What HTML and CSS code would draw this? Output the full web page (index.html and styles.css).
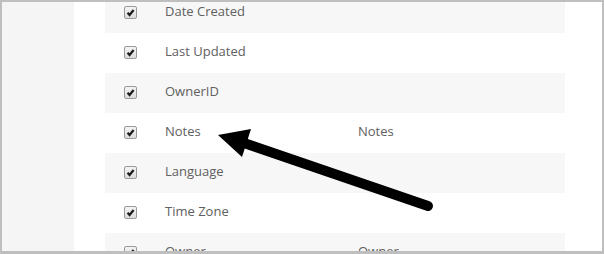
FILE: index.html
```html
<!DOCTYPE html>
<html>
<head>
<meta charset="utf-8">
<link rel="stylesheet" href="styles.css">
</head>
<body>
<div class="frame">
  <aside class="side"></aside>
  <main class="content">
    <div class="table">
      <div class="row alt"><span class="cb"><svg viewBox="0 0 12 12"><path d="M2.8 6.2 L5 8.6 L9.4 3.2"/></svg></span><span class="name">Date Created</span><span class="label"></span></div>
      <div class="row"><span class="cb"><svg viewBox="0 0 12 12"><path d="M2.8 6.2 L5 8.6 L9.4 3.2"/></svg></span><span class="name">Last Updated</span><span class="label"></span></div>
      <div class="row alt"><span class="cb"><svg viewBox="0 0 12 12"><path d="M2.8 6.2 L5 8.6 L9.4 3.2"/></svg></span><span class="name">OwnerID</span><span class="label"></span></div>
      <div class="row"><span class="cb"><svg viewBox="0 0 12 12"><path d="M2.8 6.2 L5 8.6 L9.4 3.2"/></svg></span><span class="name">Notes</span><span class="label">Notes</span></div>
      <div class="row alt"><span class="cb"><svg viewBox="0 0 12 12"><path d="M2.8 6.2 L5 8.6 L9.4 3.2"/></svg></span><span class="name">Language</span><span class="label"></span></div>
      <div class="row"><span class="cb"><svg viewBox="0 0 12 12"><path d="M2.8 6.2 L5 8.6 L9.4 3.2"/></svg></span><span class="name">Time Zone</span><span class="label"></span></div>
      <div class="row alt"><span class="cb"><svg viewBox="0 0 12 12"><path d="M2.8 6.2 L5 8.6 L9.4 3.2"/></svg></span><span class="name">Owner</span><span class="label">Owner</span></div>
    </div>
  </main>
  <svg class="arrow" width="604" height="254" viewBox="0 0 604 254">
    <line x1="428" y1="206" x2="244" y2="143" stroke="#000" stroke-width="10" stroke-linecap="round"/>
    <polygon points="218,135 251,129 242,157" fill="#000"/>
  </svg>
</div>
</body>
</html>
```
FILE: styles.css
```css
html, body {
  margin: 0;
  padding: 0;
  background: #fff;
}
.frame {
  position: relative;
  width: 604px;
  height: 254px;
  box-sizing: border-box;
  border: 2px solid #bfbfbf;
  border-bottom-width: 3px;
  display: flex;
  overflow: hidden;
  font-family: "Open Sans", "Liberation Sans", sans-serif;
}
.side {
  width: 72px;
  flex: none;
  background: #f5f5f5;
}
.content {
  flex: 1;
  padding-left: 31px;
}
.table {
  width: 460px;
  margin-top: -9px;
}
.row {
  height: 40px;
  display: flex;
  align-items: center;
  background: #fff;
}
.row.alt {
  background: #f7f7f7;
}
.cb {
  width: 11px;
  height: 11px;
  margin-left: 19px;
  margin-top: -2px;
  border: 1px solid #999;
  border-radius: 2px;
  background: linear-gradient(#f4f4f4, #dcdcdc);
  display: flex;
  flex: none;
}
.cb svg {
  width: 11px;
  height: 11px;
}
.cb path {
  fill: none;
  stroke: #1e1e1e;
  stroke-width: 2.5;
}
.name {
  margin-left: 28px;
  width: 193px;
  font-size: 13px;
  color: #606060;
  margin-top: -5px;
}
.label {
  font-size: 13px;
  color: #606060;
  margin-top: -5px;
}
.arrow {
  position: absolute;
  left: -2px;
  top: -2px;
}
```
